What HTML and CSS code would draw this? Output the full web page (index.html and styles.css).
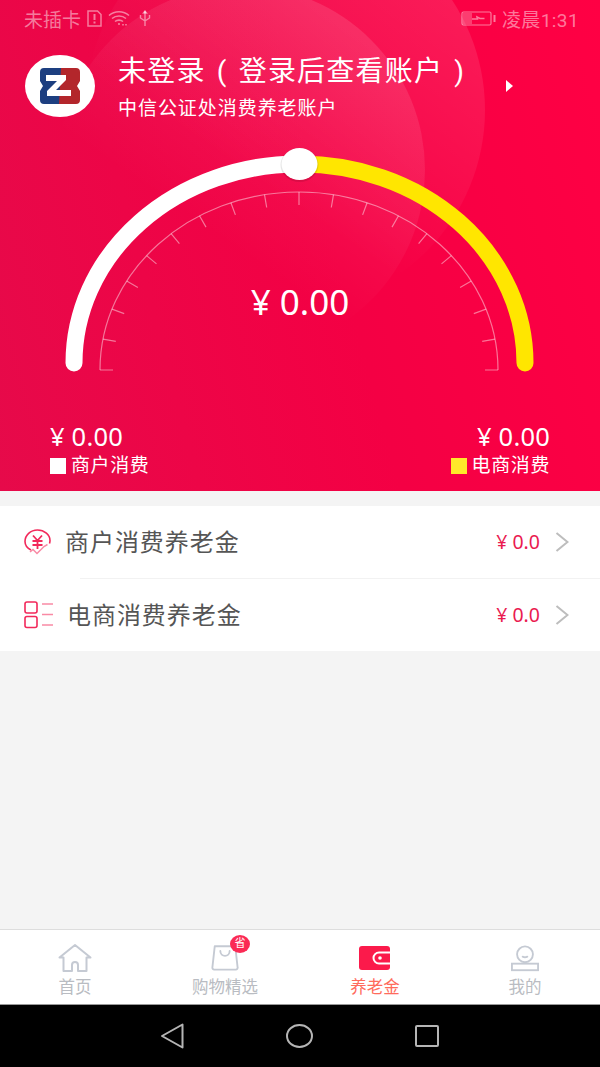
FILE: index.html
```html
<!DOCTYPE html>
<html lang="zh-CN">
<head>
    <meta charset="UTF-8">
    <meta name="viewport" content="width=device-width, initial-scale=1.0">
    <title>养老金</title>
    <link rel="stylesheet" href="styles.css">
</head>
<body>

<div class="page">

    <div class="hero">
        <!-- background circles -->
        <svg class="hero-bg" width="600" height="491" viewBox="0 0 600 491">
            <defs>
                <linearGradient id="fade" x1="0.8" y1="0.05" x2="0.25" y2="0.85">
                    <stop offset="0" stop-color="#fff" stop-opacity="0.12"/>
                    <stop offset="0.45" stop-color="#fff" stop-opacity="0.05"/>
                    <stop offset="0.75" stop-color="#fff" stop-opacity="0"/>
                </linearGradient>
            </defs>
            <circle cx="285" cy="110" r="200" fill="url(#fade)"/>
            <circle cx="241" cy="170" r="184" fill="url(#fade)"/>
        </svg>

        <div class="statusbar">
            <div class="status-left">
                <span>未插卡</span>
                <svg width="15" height="17" viewBox="0 0 15 17" fill="none" stroke="currentColor" stroke-width="1.500"><path d="M1 1h9.500L14 4.500V16H1z"/><path d="M7.500 4v6M7.500 11.500v2" stroke-width="2"/></svg>
                <svg width="22" height="16" viewBox="0 0 22 16" fill="none" stroke="currentColor" stroke-width="1.600"><path d="M1 5.500c5.500-5 14.500-5 20 0M4 8.500c3.800-3.300 10.200-3.300 14 0M7 11.500c2.200-1.800 5.800-1.800 8 0"/><path d="M11 13v2M15 14v1.500M18 14v1.500"/></svg>
                <svg class="usb" width="12" height="17" viewBox="0 0 12 17" fill="none" stroke="currentColor" stroke-width="1.400"><path d="M6 1v15M1.500 5v3l4.500 3 4.500-3V5"/><path d="M4.500 3L6 1l1.500 2z" fill="currentColor"/></svg>
            </div>
            <div class="status-right">
                <svg width="35" height="17" viewBox="0 0 35 17" fill="none" stroke="currentColor"><rect x="1" y="2" width="29" height="13" rx="1.500" stroke-width="1.200"/><rect x="2" y="3" width="9" height="11" fill="currentColor" fill-opacity="0.5" stroke="none"/><path d="M11 9h5.500l-.5-2 3 1.500h4.500" stroke-width="1.500"/><rect x="32.500" y="5" width="2" height="7" fill="currentColor" stroke="none"/></svg>
                <span class="clock">凌晨1:31</span>
            </div>
        </div>

        <div class="account">
            <div class="logo">
                <svg width="42" height="36" viewBox="0 0 42 36">
                    <path d="M5 0h18v36H5a4 4 0 0 1-4-4v-9l3-5-3-5V4a4 4 0 0 1 4-4z" fill="#1d3f80"/>
                    <path d="M22 0h15a4 4 0 0 1 4 4v9l-3 5 3 5v9a4 4 0 0 1-4 4H20z" fill="#b3262b"/>
                    <path d="M7 7h20v5L17 22h15v6H8v-5l10-10H7z" fill="#fff"/>
                </svg>
            </div>
            <div class="account-text">
                <div class="account-title">未登录 ( 登录后查看账户 )</div>
                <div class="account-sub">中信公证处消费养老账户</div>
            </div>
            <div class="arrow"></div>
        </div>

        <div class="gauge">
            <svg width="600" height="240" viewBox="0 140 600 240" fill="none">
                <path d="M100 370C100 272 189 192 299 192S498 272 498 370" stroke="#fff" stroke-opacity="0.45" stroke-width="1.200"/>
                <path stroke="#fff" stroke-opacity="0.45" stroke-width="1.200" d="M299 192L299 205M264.500 194.700L266.700 207.500M230.900 202.700L235.400 214.900M199.500 215.800L206 227.100M171.100 233.600L179.400 243.600M146.600 255.600L156.500 263.900M126.700 281L137.900 287.500M112 309.100L124.200 313.600M103 339.100L115.800 341.400M100 370L113 370M333.500 194.700L331.300 207.500M367.100 202.700L362.600 214.900M398.500 215.800L392 227.100M426.900 233.600L418.600 243.600M451.400 255.600L441.500 263.900M471.300 281L460.100 287.500M486 309.100L473.800 313.600M495 339.100L482.200 341.400M498 370L485 370"/>
                <path d="M299 164A225 199 0 0 1 525 363" stroke="#ffe600" stroke-width="17" stroke-linecap="round"/>
                <path d="M74 363A225 199 0 0 1 299 164" stroke="#fff" stroke-width="17" stroke-linecap="round"/>
                <ellipse cx="299.500" cy="165" rx="19" ry="17" fill="#000" fill-opacity="0.1"/>
                <ellipse cx="299.500" cy="164" rx="18" ry="16" fill="#fff"/>
            </svg>
            <div class="gauge-amount">¥ 0.00</div>
        </div>

        <div class="totals">
            <div class="total">
                <div class="total-amount">¥ 0.00</div>
                <div class="total-label"><i class="swatch"></i>商户消费</div>
            </div>
            <div class="total total-right">
                <div class="total-amount">¥ 0.00</div>
                <div class="total-label"><i class="swatch swatch-yellow"></i>电商消费</div>
            </div>
        </div>
    </div>

    <div class="list">
        <div class="row">
            <svg class="row-icon" width="28" height="28" viewBox="0 0 28 28" fill="none" stroke="#f2295b" stroke-width="1.600">
                <path d="M7 22C3 20 1 17 1 13.500 1 7 6.500 2 13.500 2S26 7 26 12.500c0 1-.2 2-.5 3"/>
                <path d="M9 7.500l4.500 5 4.500-5M8.500 13h10M8.500 17h10M13.500 12.500V21" stroke-width="1.800"/>
                <path d="M6 24l3-2.500 4 4 7-7 3.500-2" stroke="#f98aa5" stroke-width="1.500"/>
            </svg>
            <span class="row-title">商户消费养老金</span>
            <span class="row-value">¥ 0.0</span>
            <svg class="chevron" width="14" height="20" viewBox="0 0 14 20" fill="none" stroke="#bdbdbd" stroke-width="2"><path d="M1.500 1l11 9-11 9"/></svg>
        </div>
        <div class="row row-second">
            <svg class="row-icon" width="30" height="28" viewBox="0 0 30 28" fill="none" stroke="#f2295b" stroke-width="1.600">
                <rect x="1" y="1" width="12" height="11" rx="2"/>
                <rect x="1" y="15.500" width="12" height="11" rx="2"/>
                <path d="M18 3h11M18 13.500h11M18 24h11" stroke="#f98aa5"/>
            </svg>
            <span class="row-title">电商消费养老金</span>
            <span class="row-value">¥ 0.0</span>
            <svg class="chevron" width="14" height="20" viewBox="0 0 14 20" fill="none" stroke="#bdbdbd" stroke-width="2"><path d="M1.500 1l11 9-11 9"/></svg>
        </div>
    </div>

    <div class="spacer"></div>

    <div class="tabbar">
        <div class="tab">
            <svg width="34" height="30" viewBox="0 0 34 30" fill="none" stroke="#c5cad3" stroke-width="2"><path d="M1.500 14.500L17 2l15.500 12.500h-4V28H20v-6a3 3 0 0 0-6 0v6H5.500V14.500z" stroke-linejoin="round"/></svg>
            <span>首页</span>
        </div>
        <div class="tab">
            <div class="tab-icon-wrap">
                <svg width="28" height="29" viewBox="0 0 30 30" fill="none" stroke="#c5cad3" stroke-width="2"><path d="M4 3h22l2.500 22.500a2 2 0 0 1-2 2.500h-23a2 2 0 0 1-2-2.500z" stroke-linejoin="round"/><path d="M10 8c0 7 10 7 10 0" stroke-linecap="round"/></svg>
                <span class="badge">省</span>
            </div>
            <span>购物精选</span>
        </div>
        <div class="tab tab-active">
            <svg width="32" height="26" viewBox="0 0 32 26"><rect width="31" height="24" y="1" rx="3" fill="#fb1a4b"/><path d="M31 7.500H20a5 5 0 0 0 0 11h11" fill="none" stroke="#fff" stroke-width="2"/><circle cx="21" cy="13" r="1.800" fill="#fff"/></svg>
            <span>养老金</span>
        </div>
        <div class="tab">
            <svg width="32" height="28" viewBox="0 0 32 30" fill="none" stroke="#c5cad3" stroke-width="2"><circle cx="16" cy="10" r="8.500"/><path d="M13.500 12.500c1.500.8 3.500.8 5 0" stroke-linecap="round"/><rect x="2" y="20" width="28" height="7"/></svg>
            <span>我的</span>
        </div>
    </div>

    <div class="navbar">
        <svg width="24" height="26" viewBox="0 0 24 26" fill="none" stroke="#b5b5b5" stroke-width="2"><path d="M2 13L22.500 1.500v23z" stroke-linejoin="round"/></svg>
        <svg width="27" height="24" viewBox="0 0 27 24" fill="none" stroke="#b5b5b5" stroke-width="2"><ellipse cx="13.500" cy="12" rx="12.500" ry="11"/></svg>
        <svg width="24" height="24" viewBox="0 0 24 24" fill="none" stroke="#b5b5b5" stroke-width="2"><rect x="1" y="2" width="22" height="20" rx="1"/></svg>
    </div>

</div>

</body>
</html>
```

FILE: styles.css
```css
body {
    margin: 0;
    font-family: Roboto, "Noto Sans CJK SC", sans-serif;
    background-color: #f4f4f4;
}
.page {
    width: 600px;
    height: 1067px;
    display: flex;
    flex-direction: column;
    overflow: hidden;
}

/* red top part */
.hero {
    position: relative;
    height: 491px;
    flex: none;
    color: white;
    background: linear-gradient(75deg, #e60a4a 0%, #f40044 55%, #ff0044 100%);
}
.hero-bg {
    position: absolute;
    top: 0;
    left: 0;
}
.statusbar {
    position: relative;
    height: 36px;
    padding: 0 21px 0 24px;
    display: flex;
    justify-content: space-between;
    align-items: center;
    font-size: 19px;
    color: rgba(255, 255, 255, 0.48);
}
.status-left, .status-right {
    display: flex;
    align-items: center;
    gap: 6px;
}
.usb {
    margin-left: 3px;
}
.clock {
    letter-spacing: 0.400px;
}
.account {
    position: relative;
    height: 63px;
    margin-top: 18px;
    padding-left: 25px;
    display: flex;
    align-items: center;
}
.logo {
    width: 70px;
    height: 62px;
    border-radius: 50%;
    background: white;
    display: flex;
    align-items: center;
    justify-content: center;
}
.account-text {
    margin-left: 23px;
    width: 364px;
}
.account-title {
    font-size: 28px;
    line-height: 44px;
    letter-spacing: 1.200px;
    word-spacing: 3px;
    white-space: nowrap;
}
.account-sub {
    margin-top: 2px;
    font-size: 19px;
    line-height: 26px;
    letter-spacing: 0.950px;
}
.arrow {
    margin-left: 24px;
    border-left: 7px solid white;
    border-top: 6px solid transparent;
    border-bottom: 6px solid transparent;
}
.gauge {
    position: relative;
    height: 240px;
    margin-top: 23px;
}
.gauge svg {
    display: block;
}
.gauge-amount {
    position: absolute;
    left: 0;
    right: 0;
    top: 140px;
    text-align: center;
    font-family: "Noto Sans", sans-serif;
    font-size: 35px;
    line-height: 44px;
}
.totals {
    position: relative;
    margin-top: 41px;
    padding: 0 50px;
    display: flex;
    justify-content: space-between;
}
.total-amount {
    font-family: "Noto Sans", sans-serif;
    font-size: 25.500px;
    letter-spacing: 0.200px;
    line-height: 30px;
}
.total-right {
    text-align: right;
}
.total-label {
    display: flex;
    align-items: center;
    margin-top: 2px;
    font-size: 19px;
    letter-spacing: 0.600px;
    line-height: 26px;
}
.swatch {
    width: 16px;
    height: 16px;
    margin-right: 5px;
    background: white;
}
.swatch-yellow {
    background: #ffe92a;
}

/* list rows */
.list {
    flex: none;
    margin-top: 15px;
    background: white;
}
.row {
    height: 72px;
    padding: 0 31px 0 24px;
    display: flex;
    align-items: center;
}
.row-second {
    height: 73px;
    padding-top: 1px;
    box-sizing: border-box;
    background: linear-gradient(#f2f2f2, #f2f2f2) 80px 0 / 100% 1px no-repeat;
}
.row-icon {
    flex: none;
}
.row-title {
    flex: 1;
    margin-left: 13px;
    margin-bottom: 4px;
    font-size: 24px;
    letter-spacing: 0.950px;
    color: #555;
}
.row-value {
    margin-bottom: 2px;
    font-family: "Noto Sans", sans-serif;
    font-size: 19.500px;
    color: #ea1a50;
}
.chevron {
    margin-left: 15px;
}
.spacer {
    flex: 1;
}

/* bottom tabs */
.tabbar {
    flex: none;
    height: 74px;
    display: flex;
    background: white;
    border-top: 1px solid #ddd;
}
.tab {
    flex: 1;
    display: flex;
    flex-direction: column;
    align-items: center;
    justify-content: flex-end;
    padding-bottom: 5px;
    font-size: 16.500px;
    line-height: 22px;
    color: #b9bcc2;
}
.tab > svg, .tab-icon-wrap {
    margin-bottom: 4px;
}
.tab-active {
    color: #ff6b5c;
}
.tab-active > svg {
    margin-bottom: 6px;
}
.tab-icon-wrap {
    position: relative;
    height: 30px;
}
.badge {
    position: absolute;
    top: -8px;
    right: -11px;
    width: 20px;
    height: 18px;
    border-radius: 50%;
    background: #fb2a55;
    color: white;
    font-size: 11px;
    line-height: 18px;
    text-align: center;
}
.navbar {
    flex: none;
    height: 62px;
    background: black;
    border-top: 1px solid #999;
    display: flex;
    align-items: center;
    padding-left: 160px;
    gap: 102px;
}
```
